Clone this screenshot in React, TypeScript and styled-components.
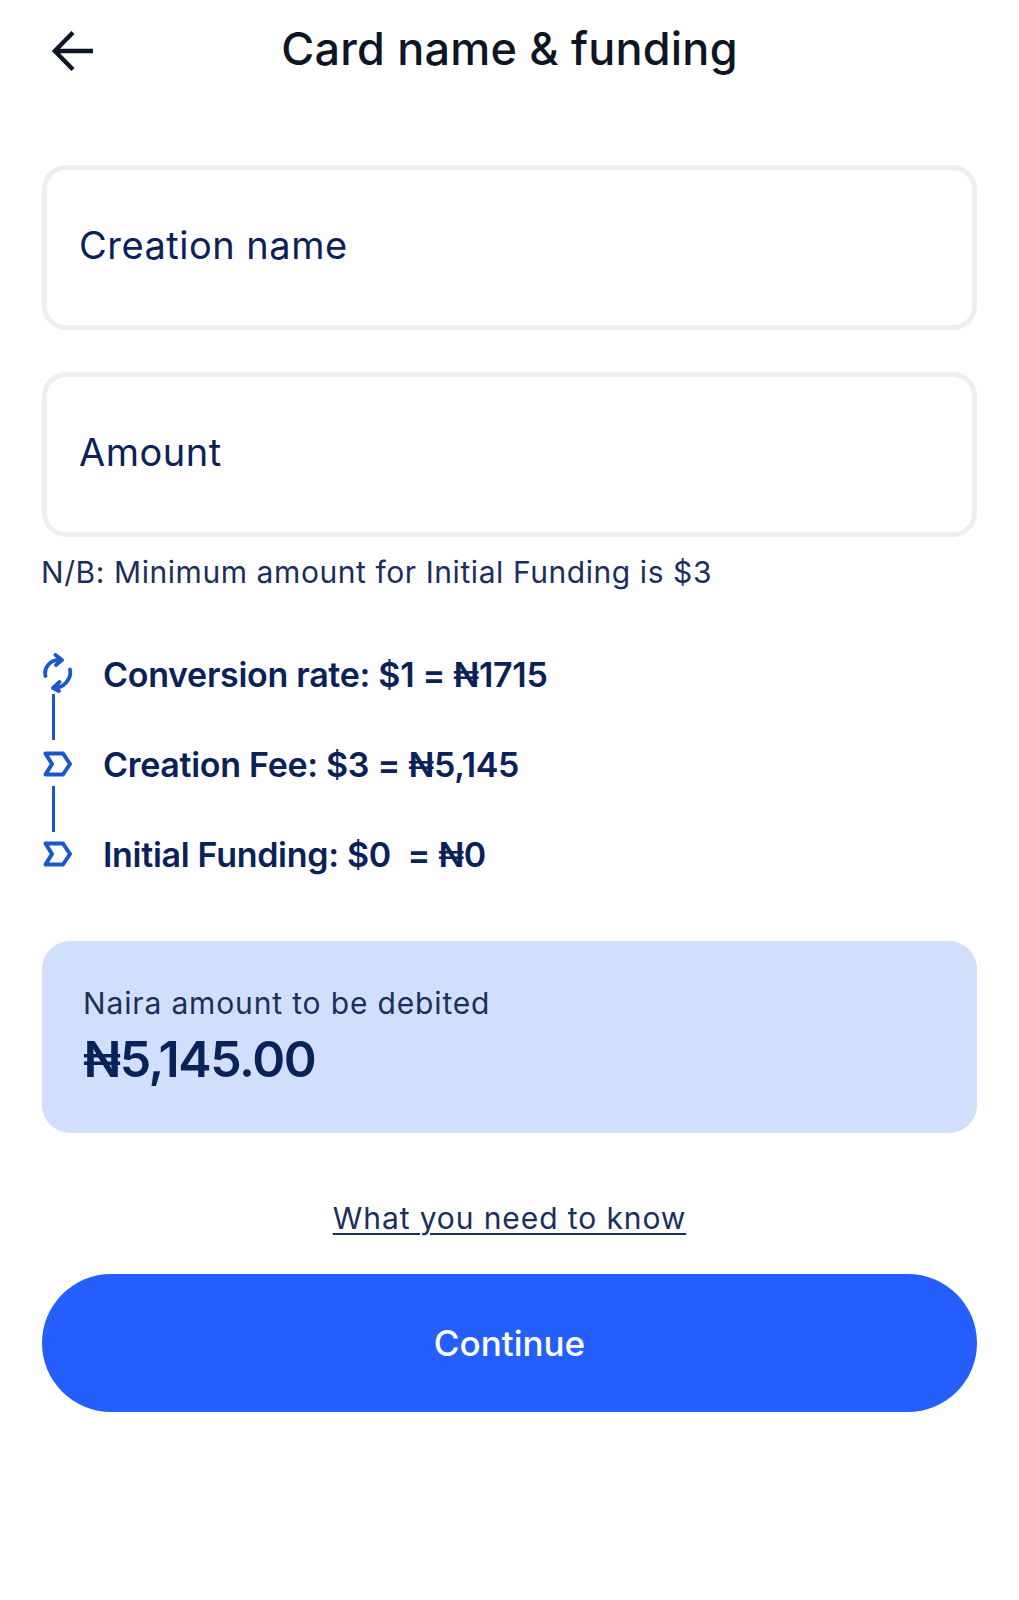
import React from "react";
import styled, { createGlobalStyle } from "styled-components";

const Global = createGlobalStyle`
  html, body { margin: 0; padding: 0; background: #fff; }
  * { box-sizing: border-box; }
`;
const Page = styled.div`
  width: 1019px; height: 1600px; background: #fff; padding: 0 42px 0 42px;
  font-family: "Inter", "Noto Sans", sans-serif; color: #0b2259;
`;
const Header = styled.header`
  height: 165px; display: grid; grid-template-columns: 1fr auto 1fr; align-items: start;
`;
const Back = styled.svg`
  width: 41px; height: 40px; margin: 31px 0 0 10px;
`;
const Title = styled.h1`
  margin: 20px 0 0; font-size: 45px; line-height: 58px; font-weight: 500; color: #0e1524; letter-spacing: 0.2px;
`;
const Fields = styled.div`
  display: flex; flex-direction: column; gap: 42px;
`;
const Field = styled.div`
  height: 165px; border: 5px solid #eeeeee; border-radius: 24px; display: flex; align-items: center;
  padding: 0 0 6px 32px; font-size: 38px; letter-spacing: 0.5px; color: #0b2259;
`;
const Note = styled.p`
  margin: 16px 0 0 -1px; font-size: 30px; line-height: 38px; letter-spacing: 0.57px; color: #1c2e5c;
`;
const Steps = styled.div`
  margin-top: 61px; display: flex; flex-direction: column;
`;
const Step = styled.div`
  display: flex; align-items: center; height: 44px; gap: 29px;
  font-size: 34px; font-weight: 600; color: #0b2259; letter-spacing: -0.3px;
`;
const StepIcon = styled.svg`
  width: 32px; height: 44px; flex: none;
`;
const Line = styled.div<{ $lift?: number }>`
  width: 2.5px; height: 46px; margin: ${(p) => -(p.$lift ?? 0)}px 0 ${(p) => p.$lift ?? 0}px 10px;
  background: #1a58c8;
`;
const Summary = styled.section`
  margin-top: 65px; height: 192px; border-radius: 28px; background: #d2dffc; padding: 43px 41px;
`;
const SummaryLabel = styled.div`
  font-size: 30px; line-height: 38px; letter-spacing: 0.85px; color: #1c2e5c;
`;
const SummaryValue = styled.div`
  margin-top: 7px; font-size: 50px; line-height: 60px; font-weight: 600; color: #0b2259; letter-spacing: -1.4px;
`;
const Help = styled.a`
  display: block; margin-top: 66px; text-align: center; font-size: 30px; line-height: 38px;
  letter-spacing: 0.9px; color: #1c2e5c; text-decoration: underline; text-underline-offset: 4px;
  text-decoration-thickness: 2px;
`;
const Button = styled.button`
  display: block; margin-top: 37px; width: 100%; height: 138px; border: 0; border-radius: 69px;
  background: #245ffd; color: #fff; font: 500 35px "Inter", sans-serif; padding-bottom: 2px;
`;

const Tag = () => (
  <StepIcon viewBox="0 0 32 44" fill="none" stroke="#1a58c8" strokeWidth="4" strokeLinejoin="round">
    <path d="M3.5 11.5H21l7 10.5-7 10.5H3.5L10 22z" />
  </StepIcon>
);

export default function App() {
  return (
    <Page>
      <Global />
      <Header>
        <Back viewBox="0 0 41 40" fill="none" stroke="#0e1524" strokeWidth="4.4">
          <path d="M3 20h38M21 1.5 2.8 20 21 38.5" />
        </Back>
        <Title>Card name &amp; funding</Title>
      </Header>
      <Fields>
        <Field>Creation name</Field>
        <Field>Amount</Field>
      </Fields>
      <Note>N/B: Minimum amount for Initial Funding is $3</Note>
      <Steps>
        <Step>
          <StepIcon viewBox="0 0 32 44" fill="none" stroke="#1a58c8" strokeWidth="3.8" strokeLinecap="round" strokeLinejoin="round">
            <path d="M3.5 24C1.5 15 9 7 19 8M13.5 3 20 8l-6 5M28 17.5c2 10-7 19-17 18.5M17.5 30 11 36l6 3" />
          </StepIcon>
          Conversion rate: $1 = ₦1715
        </Step>
        <Line $lift={2} />
        <Step><Tag />Creation Fee: $3 = ₦5,145</Step>
        <Line />
        <Step><Tag />Initial Funding: $0&nbsp; = ₦0</Step>
      </Steps>
      <Summary>
        <SummaryLabel>Naira amount to be debited</SummaryLabel>
        <SummaryValue>₦5,145.00</SummaryValue>
      </Summary>
      <Help>What you need to know</Help>
      <Button>Continue</Button>
    </Page>
  );
}
